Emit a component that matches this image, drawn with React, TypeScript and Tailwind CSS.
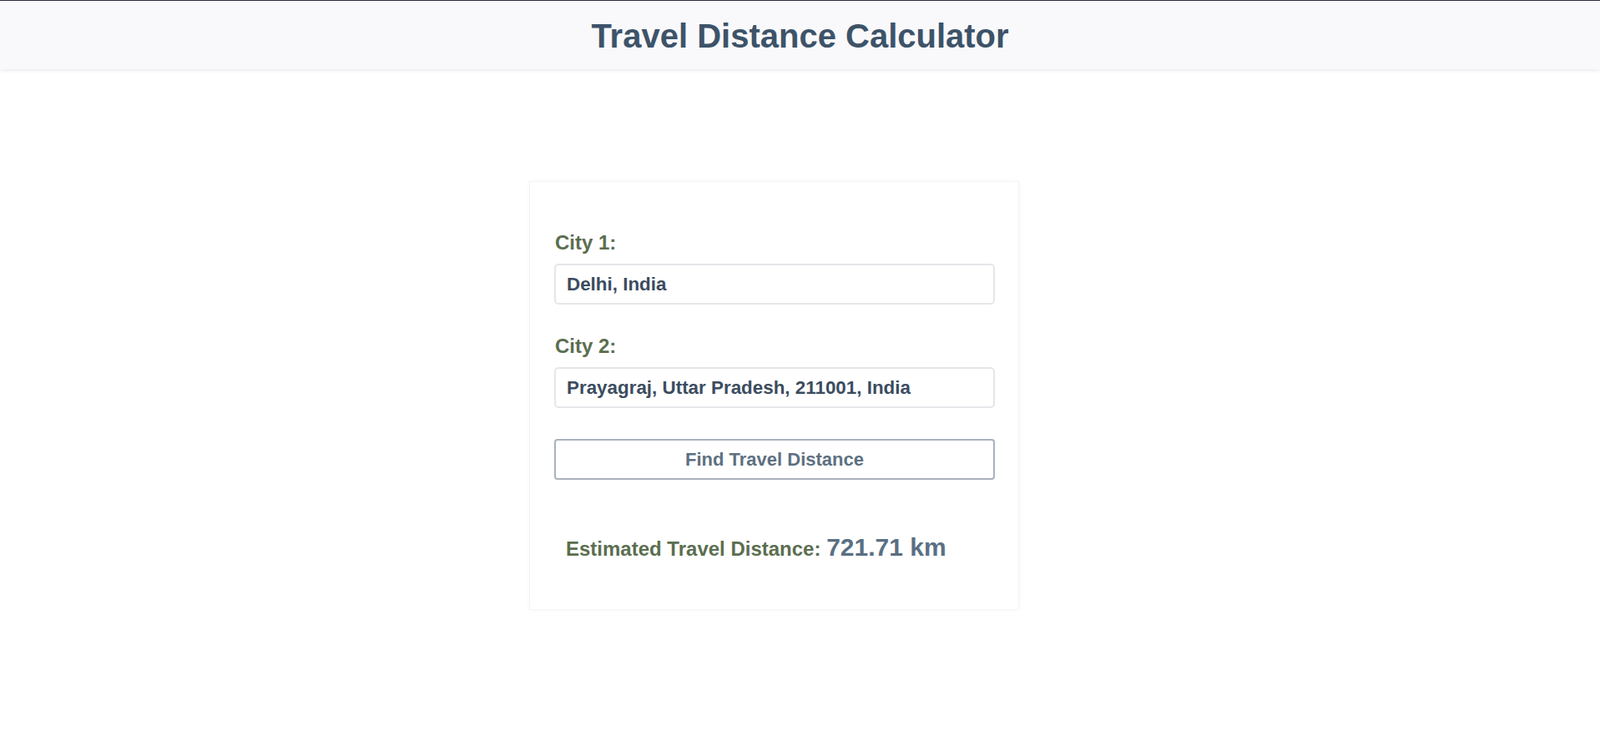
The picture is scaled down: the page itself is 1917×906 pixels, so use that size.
import { useState } from "react"

export default function App() {
  const [city1, setCity1] = useState("Delhi, India")
  const [city2, setCity2] = useState("Prayagraj, Uttar Pradesh, 211001, India")

  return (
    <div className="min-h-screen bg-white font-['Liberation_Sans',Arial,sans-serif]">
      <header className="border-t border-[#2c2c3a] bg-[#f9f9fb] pt-[19px] pb-[17px] shadow-[0_2px_4px_rgba(0,0,0,0.08)]">
        <h1 className="text-center text-[40px] font-bold leading-[46px] text-[#3d5369]">Travel Distance Calculator</h1>
      </header>

      <div className="flex justify-center pr-[62px] pt-[134px]">
        <div className="w-[587px] border border-[#f4f4f5] bg-white pl-[29px] pr-[28px] pt-[59px] pb-[51px] shadow-[0_0_6px_rgba(0,0,0,0.04)]">
          <label className="block pl-px text-[24px] font-bold leading-[28px] text-[#5b6e4f]">City 1:</label>
          <input
            value={city1}
            onChange={(e) => setCity1(e.target.value)}
            className="mt-[11px] block h-[49px] w-full rounded-[5px] border-2 border-[#e4e6ea] px-[13px] text-[22.4px] font-bold text-[#3b4c60] outline-none"
          />

          <label className="mt-[36px] block pl-px text-[24px] font-bold leading-[28px] text-[#5b6e4f]">City 2:</label>
          <input
            value={city2}
            onChange={(e) => setCity2(e.target.value)}
            className="mt-[11px] block h-[49px] w-full rounded-[5px] border-2 border-[#e4e6ea] px-[13px] text-[22.4px] font-bold text-[#3b4c60] outline-none"
          />

          <button className="mt-[37px] block h-[49px] w-full rounded-[4px] border-2 border-[#aab2be] bg-white text-[22px] font-bold text-[#5d7081]">
            Find Travel Distance
          </button>

          <p className="mt-[62px] pl-[14px] leading-[37px]">
            <span className="text-[24px] font-bold text-[#5b6e4f]">Estimated Travel Distance: </span>
            <span className="text-[30px] font-bold text-[#5a6f83]">721.71 km</span>
          </p>
        </div>
      </div>
    </div>
  )
}
